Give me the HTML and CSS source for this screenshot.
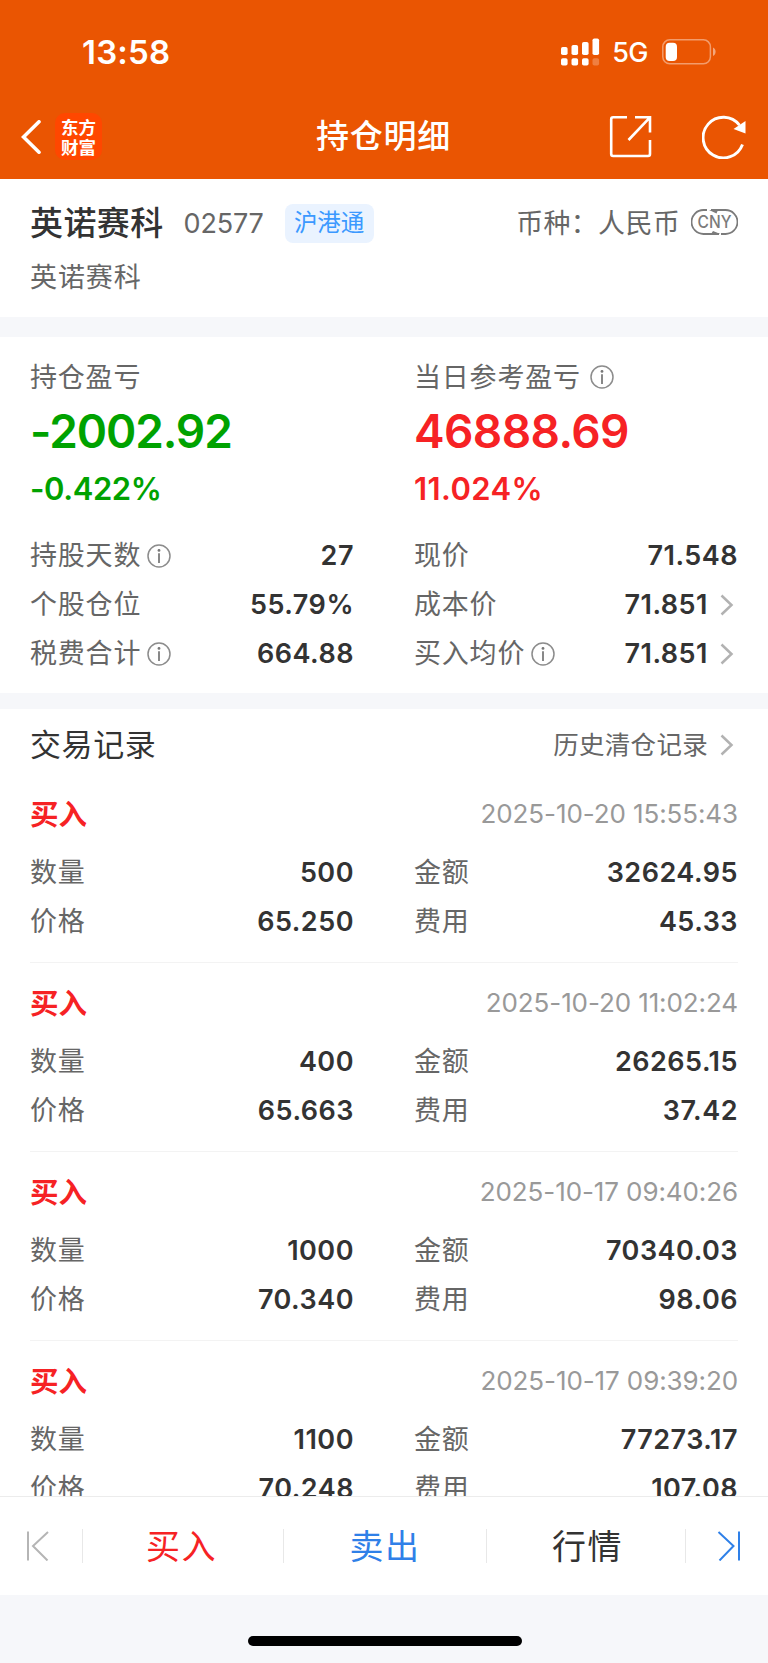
FILE: index.html
```html
<!DOCTYPE html>
<html lang="zh-CN">
<head>
  <meta charset="UTF-8">
  <title>持仓明细</title>
  <meta name="viewport" content="width=device-width, initial-scale=1">
  <link rel="stylesheet" href="styles.css">
</head>
<body>
  <svg class="sprite" width="0" height="0">
    <symbol id="info" viewBox="0 0 24 24">
      <circle cx="12" cy="12" r="11" fill="none" stroke="#8c8c8c" stroke-width="1.5"/>
      <circle cx="12" cy="6.4" r="1.4" fill="#777"/>
      <path d="M12 9.3V19" stroke="#888" stroke-width="2"/>
    </symbol>
    <symbol id="more" viewBox="0 0 14 22">
      <path d="M1.5 1.5L11.5 11L1.5 20.500" fill="none" stroke="#b2b2b2" stroke-width="2.5"/>
    </symbol>
  </svg>

  <header class="top">
    <!-- statusbalk -->
    <div class="statusbar">
      <span class="time">13:58</span>
      <div class="signals">
        <svg class="signal" width="39" height="28" viewBox="0 0 39 28" fill="#fff">
          <rect x="0" y="9" width="6.600" height="8" rx="1.800"/>
          <rect x="10.500" y="7" width="6.600" height="10" rx="1.800"/>
          <rect x="21" y="4" width="6.600" height="13" rx="1.800"/>
          <rect x="31.500" y="0.500" width="6.600" height="16.500" rx="1.800"/>
          <rect x="0" y="20.300" width="6.600" height="7.200" rx="1.800"/>
          <rect x="10.500" y="20.300" width="6.600" height="7.200" rx="1.800"/>
          <rect x="21" y="20.300" width="6.600" height="7.200" rx="1.800"/>
          <rect x="31.500" y="20.300" width="6.600" height="7.200" rx="1.800" opacity="0.25"/>
        </svg>
        <span class="net">5G</span>
        <svg class="battery" width="54" height="26" viewBox="0 0 54 26">
          <rect x="0.800" y="0.800" width="47.600" height="24" rx="7" fill="none" stroke="#fff" stroke-opacity="0.42" stroke-width="1.500"/>
          <rect x="3.700" y="3.700" width="11.300" height="18.300" rx="4" fill="#fff"/>
          <path d="M51 8.500C54.500 10 54.500 15.500 51 17Z" fill="#fff" fill-opacity="0.48"/>
        </svg>
      </div>
    </div>
    <nav class="navbar">
      <div class="nav-left">
        <svg width="20" height="34" viewBox="0 0 20 34">
          <path d="M18 1.800L2.500 17L18 32.200" fill="none" stroke="#fff" stroke-width="3.600" stroke-linecap="round"/>
        </svg>
        <div class="logo"><span>东方</span><span>财富</span></div>
      </div>
      <h1>持仓明细</h1>
      <div class="nav-right">
        <svg width="43" height="43" viewBox="0 0 43 43" fill="none" stroke="#fff" stroke-width="2.600">
          <path d="M18 2.200H4.200Q2.200 2.200 2.200 4.200V39Q2.200 41 4.200 41H39Q41 41 41 39V25"/>
          <path d="M26 2.200H41V17.500M40.500 2.800L19.500 25"/>
        </svg>
        <svg width="44" height="44" viewBox="0 0 44 44">
          <path d="M40.500 29.500A20.300 20.300 0 1 1 37.500 10.200" fill="none" stroke="#fff" stroke-width="2.900"/>
          <path d="M43.500 6V18.500L31.500 14Z" fill="#fff"/>
        </svg>
      </div>
    </nav>
  </header>

  <section class="stock">
    <div class="stock-head">
      <span class="name">英诺赛科</span>
      <span class="code">02577</span>
      <span class="tag">沪港通</span>
      <span class="currency">币种：人民币</span>
      <svg class="cny" width="47" height="26" viewBox="0 0 47 26">
        <path d="M30 25H34.500A12 12 0 0 0 34.500 1H20M16 1H12.500A12 12 0 0 0 12.500 25H28" fill="none" stroke="#7b7b7b" stroke-width="1.800"/>
        <path d="M18 1L25.500 4.500L27 1ZM20 25L22 22L29.500 25Z" fill="#7b7b7b"/>
        <text x="23.500" y="19" text-anchor="middle" textLength="34" lengthAdjust="spacingAndGlyphs">CNY</text>
      </svg>
    </div>
    <p class="subname">英诺赛科</p>
  </section>

  <section class="position">
    <div class="profit">
      <div class="col green">
        <p class="label">持仓盈亏</p>
        <p class="big">-2002.92</p>
        <p class="pct">-0.422%</p>
      </div>
      <div class="col red">
        <p class="label">当日参考盈亏<svg class="info wide"><use href="#info"/></svg></p>
        <p class="big">46888.69</p>
        <p class="pct">11.024%</p>
      </div>
    </div>
    <div class="grid">
      <div class="row"><span class="label">持股天数<svg class="info"><use href="#info"/></svg></span><b>27</b></div>
      <div class="row"><span class="label">现价</span><b>71.548</b></div>
      <div class="row"><span class="label">个股仓位</span><b>55.79%</b></div>
      <div class="row"><span class="label">成本价</span><b>71.851</b><svg class="more"><use href="#more"/></svg></div>
      <div class="row"><span class="label">税费合计<svg class="info"><use href="#info"/></svg></span><b>664.88</b></div>
      <div class="row"><span class="label">买入均价<svg class="info"><use href="#info"/></svg></span><b>71.851</b><svg class="more"><use href="#more"/></svg></div>
    </div>
  </section>

  <section class="records">
    <div class="records-head">
      <h2>交易记录</h2>
      <span class="history">历史清仓记录</span>
      <svg class="more"><use href="#more"/></svg>
    </div>
    <article class="record">
      <div class="record-head"><span class="side">买入</span><time>2025-10-20 15:55:43</time></div>
      <div class="grid">
        <div class="row"><span class="label">数量</span><b>500</b></div>
        <div class="row"><span class="label">金额</span><b>32624.95</b></div>
        <div class="row"><span class="label">价格</span><b>65.250</b></div>
        <div class="row"><span class="label">费用</span><b>45.33</b></div>
      </div>
    </article>
    <article class="record">
      <div class="record-head"><span class="side">买入</span><time>2025-10-20 11:02:24</time></div>
      <div class="grid">
        <div class="row"><span class="label">数量</span><b>400</b></div>
        <div class="row"><span class="label">金额</span><b>26265.15</b></div>
        <div class="row"><span class="label">价格</span><b>65.663</b></div>
        <div class="row"><span class="label">费用</span><b>37.42</b></div>
      </div>
    </article>
    <article class="record">
      <div class="record-head"><span class="side">买入</span><time>2025-10-17 09:40:26</time></div>
      <div class="grid">
        <div class="row"><span class="label">数量</span><b>1000</b></div>
        <div class="row"><span class="label">金额</span><b>70340.03</b></div>
        <div class="row"><span class="label">价格</span><b>70.340</b></div>
        <div class="row"><span class="label">费用</span><b>98.06</b></div>
      </div>
    </article>
    <article class="record">
      <div class="record-head"><span class="side">买入</span><time>2025-10-17 09:39:20</time></div>
      <div class="grid">
        <div class="row"><span class="label">数量</span><b>1100</b></div>
        <div class="row"><span class="label">金额</span><b>77273.17</b></div>
        <div class="row"><span class="label">价格</span><b>70.248</b></div>
        <div class="row"><span class="label">费用</span><b>107.08</b></div>
      </div>
    </article>
  </section>

  <footer>
    <div class="tabs">
      <div class="edge">
        <svg width="24" height="30" viewBox="0 0 24 30" fill="none" stroke="#b5b5b5" stroke-width="2">
          <path d="M2 0.500V29.500M22 1L7 15L21.500 29.500"/>
        </svg>
      </div>
      <div class="tab buy">买入</div>
      <div class="tab sell">卖出</div>
      <div class="tab quote">行情</div>
      <div class="edge">
        <svg width="24" height="30" viewBox="0 0 24 30" fill="none" stroke="#2f80e8" stroke-width="2">
          <path d="M22 0.500V29.500M1.500 1L16.500 15L2.500 29.500"/>
        </svg>
      </div>
    </div>
    <div class="home"><div class="home-bar"></div></div>
  </footer>
</body>
</html>
```
FILE: styles.css
```css
* { box-sizing: border-box; margin: 0; padding: 0; }
body {
  font-family: Inter, "Noto Sans CJK SC", sans-serif;
  background: #fff;
  color: #333;
  width: 768px;
  height: 1663px;
  display: flex;
  flex-direction: column;
  overflow: hidden;
}
.sprite { display: none; }
svg { display: block; flex: none; }

/* kop */
.top {
  background: #ea5502;
  color: #fff;
  height: 179px;
  flex: none;
}
.statusbar {
  height: 94px;
  padding: 9px 52px 0 82px;
  display: flex;
  align-items: center;
  justify-content: space-between;
}
.time { font-size: 33px; font-weight: 600; letter-spacing: 0.2px; }
.signals { display: flex; align-items: center; }
.net { font-size: 27px; font-weight: 500; margin: 2px 14px 0 12px; letter-spacing: -0.5px; }
.navbar {
  height: 85px;
  padding: 0 22px 0 21px;
  display: flex;
  align-items: center;
}
.nav-left, .nav-right { flex: 1; display: flex; align-items: center; }
.nav-left { gap: 14px; }
.nav-right { justify-content: flex-end; gap: 50px; }
.logo {
  width: 47px;
  height: 47px;
  border-radius: 10px;
  background: #ff4700;
  display: flex;
  flex-direction: column;
  align-items: center;
  justify-content: center;
  font-family: "Noto Sans CJK SC", sans-serif;
  font-size: 17.5px;
  font-weight: 700;
  line-height: 20px;
}
h1 { font-size: 33px; font-weight: 500; letter-spacing: 0.7px; line-height: 48px; padding-bottom: 1px; }

/* aandeel */
.stock { height: 138px; padding: 18px 30px 0; flex: none; }
.stock-head { display: flex; align-items: center; height: 52px; }
.name { font-size: 33px; font-weight: 500; letter-spacing: 0.4px; line-height: 48px; }
.code { font-size: 27px; color: #666; margin-left: 20px; letter-spacing: -0.2px; }
.tag {
  margin-left: 21px;
  width: 89px;
  height: 39px;
  line-height: 38px;
  border-radius: 8px;
  background: #eaf3ff;
  color: #3b99ff;
  font-size: 23.5px;
  text-align: center;
}
.currency { margin-left: auto; padding-bottom: 4px; font-size: 27px; color: #666; letter-spacing: 0.3px; }
.cny { margin: 0 0 3px 11px; }
.cny text { font-size: 17.5px; font-weight: 500; fill: #7b7b7b; }
.subname { font-size: 27px; line-height: 58px; color: #666; letter-spacing: 0.9px; }

/* positie */
.position {
  height: 376px;
  border-top: 20px solid #f6f7fa;
  padding: 16px 30px 0;
  flex: none;
}
.profit { display: flex; gap: 60px; height: 178px; }
.col { flex: 1; }
.label {
  font-size: 27px;
  color: #666;
  letter-spacing: 0.8px;
  padding-bottom: 4px;
  display: flex;
  align-items: center;
  white-space: nowrap;
}
p.label { height: 48px; }
.info { width: 24px; height: 24px; margin: 5px 0 0 6px; }
.info.wide { margin: 3px 0 0 9px; }
.big { font-size: 46px; font-weight: 600; line-height: 60px; letter-spacing: -0.6px; }
.pct { font-size: 31px; font-weight: 600; line-height: 55px; letter-spacing: 0.4px; }
.green { color: #00a200; }
.green .big { letter-spacing: -1.1px; }
.green .pct { letter-spacing: -0.4px; }
.red { color: #f62224; }
.grid { display: grid; grid-template-columns: 1fr 1fr; column-gap: 60px; }
.row { height: 49px; display: flex; align-items: center; }
.row b { margin-left: auto; font-size: 27px; font-weight: 600; letter-spacing: 0.5px; }
.more { width: 14px; height: 22px; margin: 0 4px 0 12px; }

/* transacties */
.records {
  border-top: 16px solid #f6f7fa;
  padding: 0 30px;
  flex: 1;
  min-height: 0;
  overflow: hidden;
}
.records-head { height: 65px; padding-top: 6px; display: flex; align-items: center; }
h2 { font-size: 31px; font-weight: 400; letter-spacing: 0.6px; padding-bottom: 5px; }
.history { margin-left: auto; padding-bottom: 5px; font-size: 25.5px; color: #666; letter-spacing: 0.3px; }
.record { height: 189px; padding-top: 15px; border-bottom: 1px solid #f3f3f3; }
.record-head {
  height: 48px;
  margin-bottom: 11px;
  display: flex;
  align-items: center;
  justify-content: space-between;
}
.side { font-size: 28.5px; font-weight: 600; padding-bottom: 2px; color: #f62224; }
time { font-size: 26px; color: #999; letter-spacing: -0.1px; }

/* onderbalk */
footer { flex: none; height: 167px; background: #f6f7fa; border-top: 1px solid #ececec; }
.tabs { height: 98px; background: #fff; display: flex; align-items: center; }
.edge { width: 82px; display: flex; justify-content: center; padding-right: 6px; }
.edge:last-child { padding: 0 0 0 3px; }
.tab {
  width: 201px;
  height: 34px;
  padding-bottom: 4px;
  font-size: 34px;
  letter-spacing: 1.5px;
  display: flex;
  align-items: center;
  justify-content: center;
  border-left: 1px solid #e8e8e8;
}
.buy { color: #f62224; padding-right: 3px; }
.sell { color: #2f80e8; width: 203px; }
.quote { width: 200px; padding-left: 3px; border-right: 1px solid #e8e8e8; }
.home { display: flex; justify-content: center; padding: 41px 0 0 1px; }
.home-bar { width: 274px; height: 10px; border-radius: 5px; background: #000; }
```
